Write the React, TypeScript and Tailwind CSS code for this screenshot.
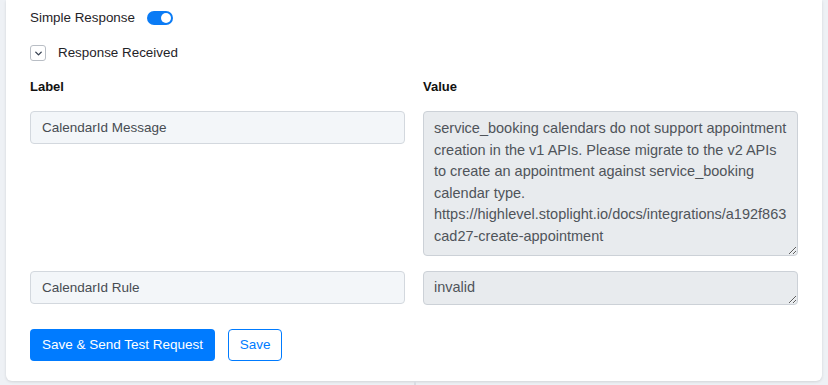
import { ChevronDown } from 'lucide-react';

const font = "font-['Liberation_Sans',Arial,sans-serif]";

const message =
  'service_booking calendars do not support appointment\ncreation in the v1 APIs. Please migrate to the v2 APIs\nto create an appointment against service_booking\ncalendar type.\nhttps://highlevel.stoplight.io/docs/integrations/a192f863\ncad27-create-appointment';

function Toggle({ on }: { on: boolean }) {
  return (
    <span
      className={`flex h-[14px] w-[26px] items-center rounded-full px-[2px] ${
        on ? 'justify-end bg-[#0a7bf5]' : 'justify-start bg-gray-300'
      }`}
    >
      <span className="h-[10px] w-[10px] rounded-full bg-white" />
    </span>
  );
}

function LabelInput({ value }: { value: string }) {
  return (
    <input
      readOnly
      value={value}
      className="h-[33px] w-full rounded-[4px] border border-[#d3d8de] bg-[#f3f6f9] px-[11px] text-[13.5px] text-[#474c52] outline-none"
    />
  );
}

export default function App() {
  return (
    <div className={`flex h-[385px] w-[828px] flex-col overflow-hidden bg-[#eef1f5] ${font}`}>
      <div className="mx-[6px] w-[816px] rounded-b-[6px] bg-white px-[24px] pt-[8px] pb-[20px] shadow-[0_1px_3px_rgba(0,0,0,0.12)]">
        <div className="flex h-[20px] items-center gap-[12px] text-[13.4px] text-[#1f2328]">
          <span>Simple Response</span>
          <Toggle on />
        </div>

        <div className="mt-[15px] flex h-[20px] items-center gap-[12px] text-[13.4px] text-[#1f2328]">
          <span className="flex h-[16px] w-[16px] items-center justify-center rounded-[3px] border border-[#b9bec5] bg-white">
            <ChevronDown size={11} strokeWidth={3} className="text-[#374151]" />
          </span>
          <span>Response Received</span>
        </div>

        <div className="mt-[14px] grid grid-cols-2 gap-x-[18px] text-[13px] font-bold text-[#111]">
          <div className="flex h-[20px] items-center">Label</div>
          <div className="flex h-[20px] items-center">Value</div>
        </div>

        <div className="mt-[14px] grid grid-cols-2 items-start gap-x-[18px] gap-y-[15px]">
          <LabelInput value="CalendarId Message" />
          <textarea
            readOnly
            value={message}
            className="h-[145px] w-full overflow-hidden whitespace-pre rounded-[4px] border border-[#ccd1d7] bg-[#e8ebee] px-[10px] pt-[6px] text-[14.5px] leading-[21.5px] text-[#4f545a] outline-none"
          />
          <LabelInput value="CalendarId Rule" />
          <textarea
            readOnly
            value="invalid"
            className="h-[34px] w-full overflow-hidden rounded-[4px] border border-[#ccd1d7] bg-[#e8ebee] px-[10px] pt-[6px] text-[14.5px] leading-[18px] text-[#4f545a] outline-none"
          />
        </div>

        <div className="mt-[24px] flex gap-[13px] text-[13.5px]">
          <button className="h-[32px] rounded-[4px] bg-[#007bff] px-[12px] text-white">
            Save &amp; Send Test Request
          </button>
          <button className="h-[32px] w-[54px] rounded-[4px] border border-[#007bff] bg-white text-[#007bff]">
            Save
          </button>
        </div>
      </div>
      <div className="ml-[414px] flex-1 border-l-2 border-[#d9dde3]" />
    </div>
  );
}
